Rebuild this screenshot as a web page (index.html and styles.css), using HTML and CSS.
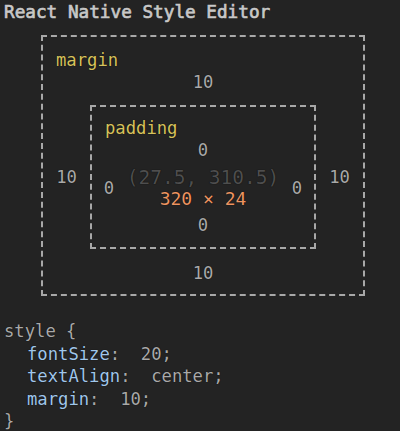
FILE: index.html
```html
<!DOCTYPE html>
<html>
<head>
<meta charset="utf-8">
<link rel="stylesheet" href="styles.css">
</head>
<body>
<div class="title">React Native Style Editor</div>
<div class="margin-box">
  <div class="label">margin</div>
  <div class="val center">10</div>
  <div class="mid">
    <div class="val side">10</div>
    <div class="padding-box">
      <div class="label">padding</div>
      <div class="val center">0</div>
      <div class="pmid">
        <div class="val pside">0</div>
        <div class="content">
          <div class="coords">(27.5, 310.5)</div>
          <div class="dims">320 × 24</div>
        </div>
        <div class="val pside">0</div>
      </div>
      <div class="val center pbottom">0</div>
    </div>
    <div class="val side">10</div>
  </div>
  <div class="val center mbottom">10</div>
</div>
<div class="code">
  <div class="line">style {</div>
  <div class="line indent"><span class="key">fontSize</span>:  20;</div>
  <div class="line indent"><span class="key">textAlign</span>:  center;</div>
  <div class="line indent"><span class="key">margin</span>:  10;</div>
  <div class="line">}</div>
</div>
</body>
</html>
```
FILE: styles.css
```css
html, body {
  margin: 0;
  padding: 0;
  background: #232323;
}
body {
  font-family: "DejaVu Sans Mono", "Liberation Mono", monospace;
  font-size: 17.2px;
  color: #a9a9a9;
  padding: 0 4px;
  text-shadow: 0 0 1px #000;
}
.title {
  font-weight: normal;
  font-size: 17.7px;
  -webkit-text-stroke: 0.7px #c8c8c8;
  color: #c8c8c8;
  line-height: 24px;
}
.margin-box {
  margin: 11px 0 0 37px;
  width: 324px;
  height: 261px;
  box-sizing: border-box;
  border: 2px dashed #a8a8a8;
  padding: 13px 0 0 13px;
}
.label {
  color: #d6c25c;
  line-height: 21px;
}
.val {
  line-height: 22px;
}
.center {
  text-align: center;
}
.margin-box > .center {
  margin-left: -13px;
}
.mid {
  display: grid;
  grid-template-columns: 1fr 226px 1fr;
  align-items: center;
  margin: 12px 0 0 -13px;
}
.side {
  text-align: center;
}
.padding-box {
  box-sizing: border-box;
  height: 144px;
  border: 2px dashed #a8a8a8;
  padding: 11px 0 0 13px;
}
.padding-box > .center {
  margin-left: -13px;
}
.pmid {
  display: grid;
  grid-template-columns: 34px 1fr 34px;
  align-items: center;
  margin: 6px 0 0 -13px;
}
.pside {
  text-align: center;
}
.content {
  text-align: center;
}
.coords {
  color: #4e4e4e;
  font-size: 19.5px;
  line-height: 21px;
  white-space: nowrap;
}
.dims {
  color: #ec9461;
  font-size: 18px;
  line-height: 21px;
}
.pbottom {
  margin-top: 5px;
}
.mbottom {
  margin-top: 13px;
}
.code {
  margin-top: 24px;
}
.line {
  line-height: 22.5px;
  color: #a9a9a9;
  white-space: pre;
}
.indent {
  padding-left: 23px;
}
.key {
  color: #a0c6ea;
}
```
